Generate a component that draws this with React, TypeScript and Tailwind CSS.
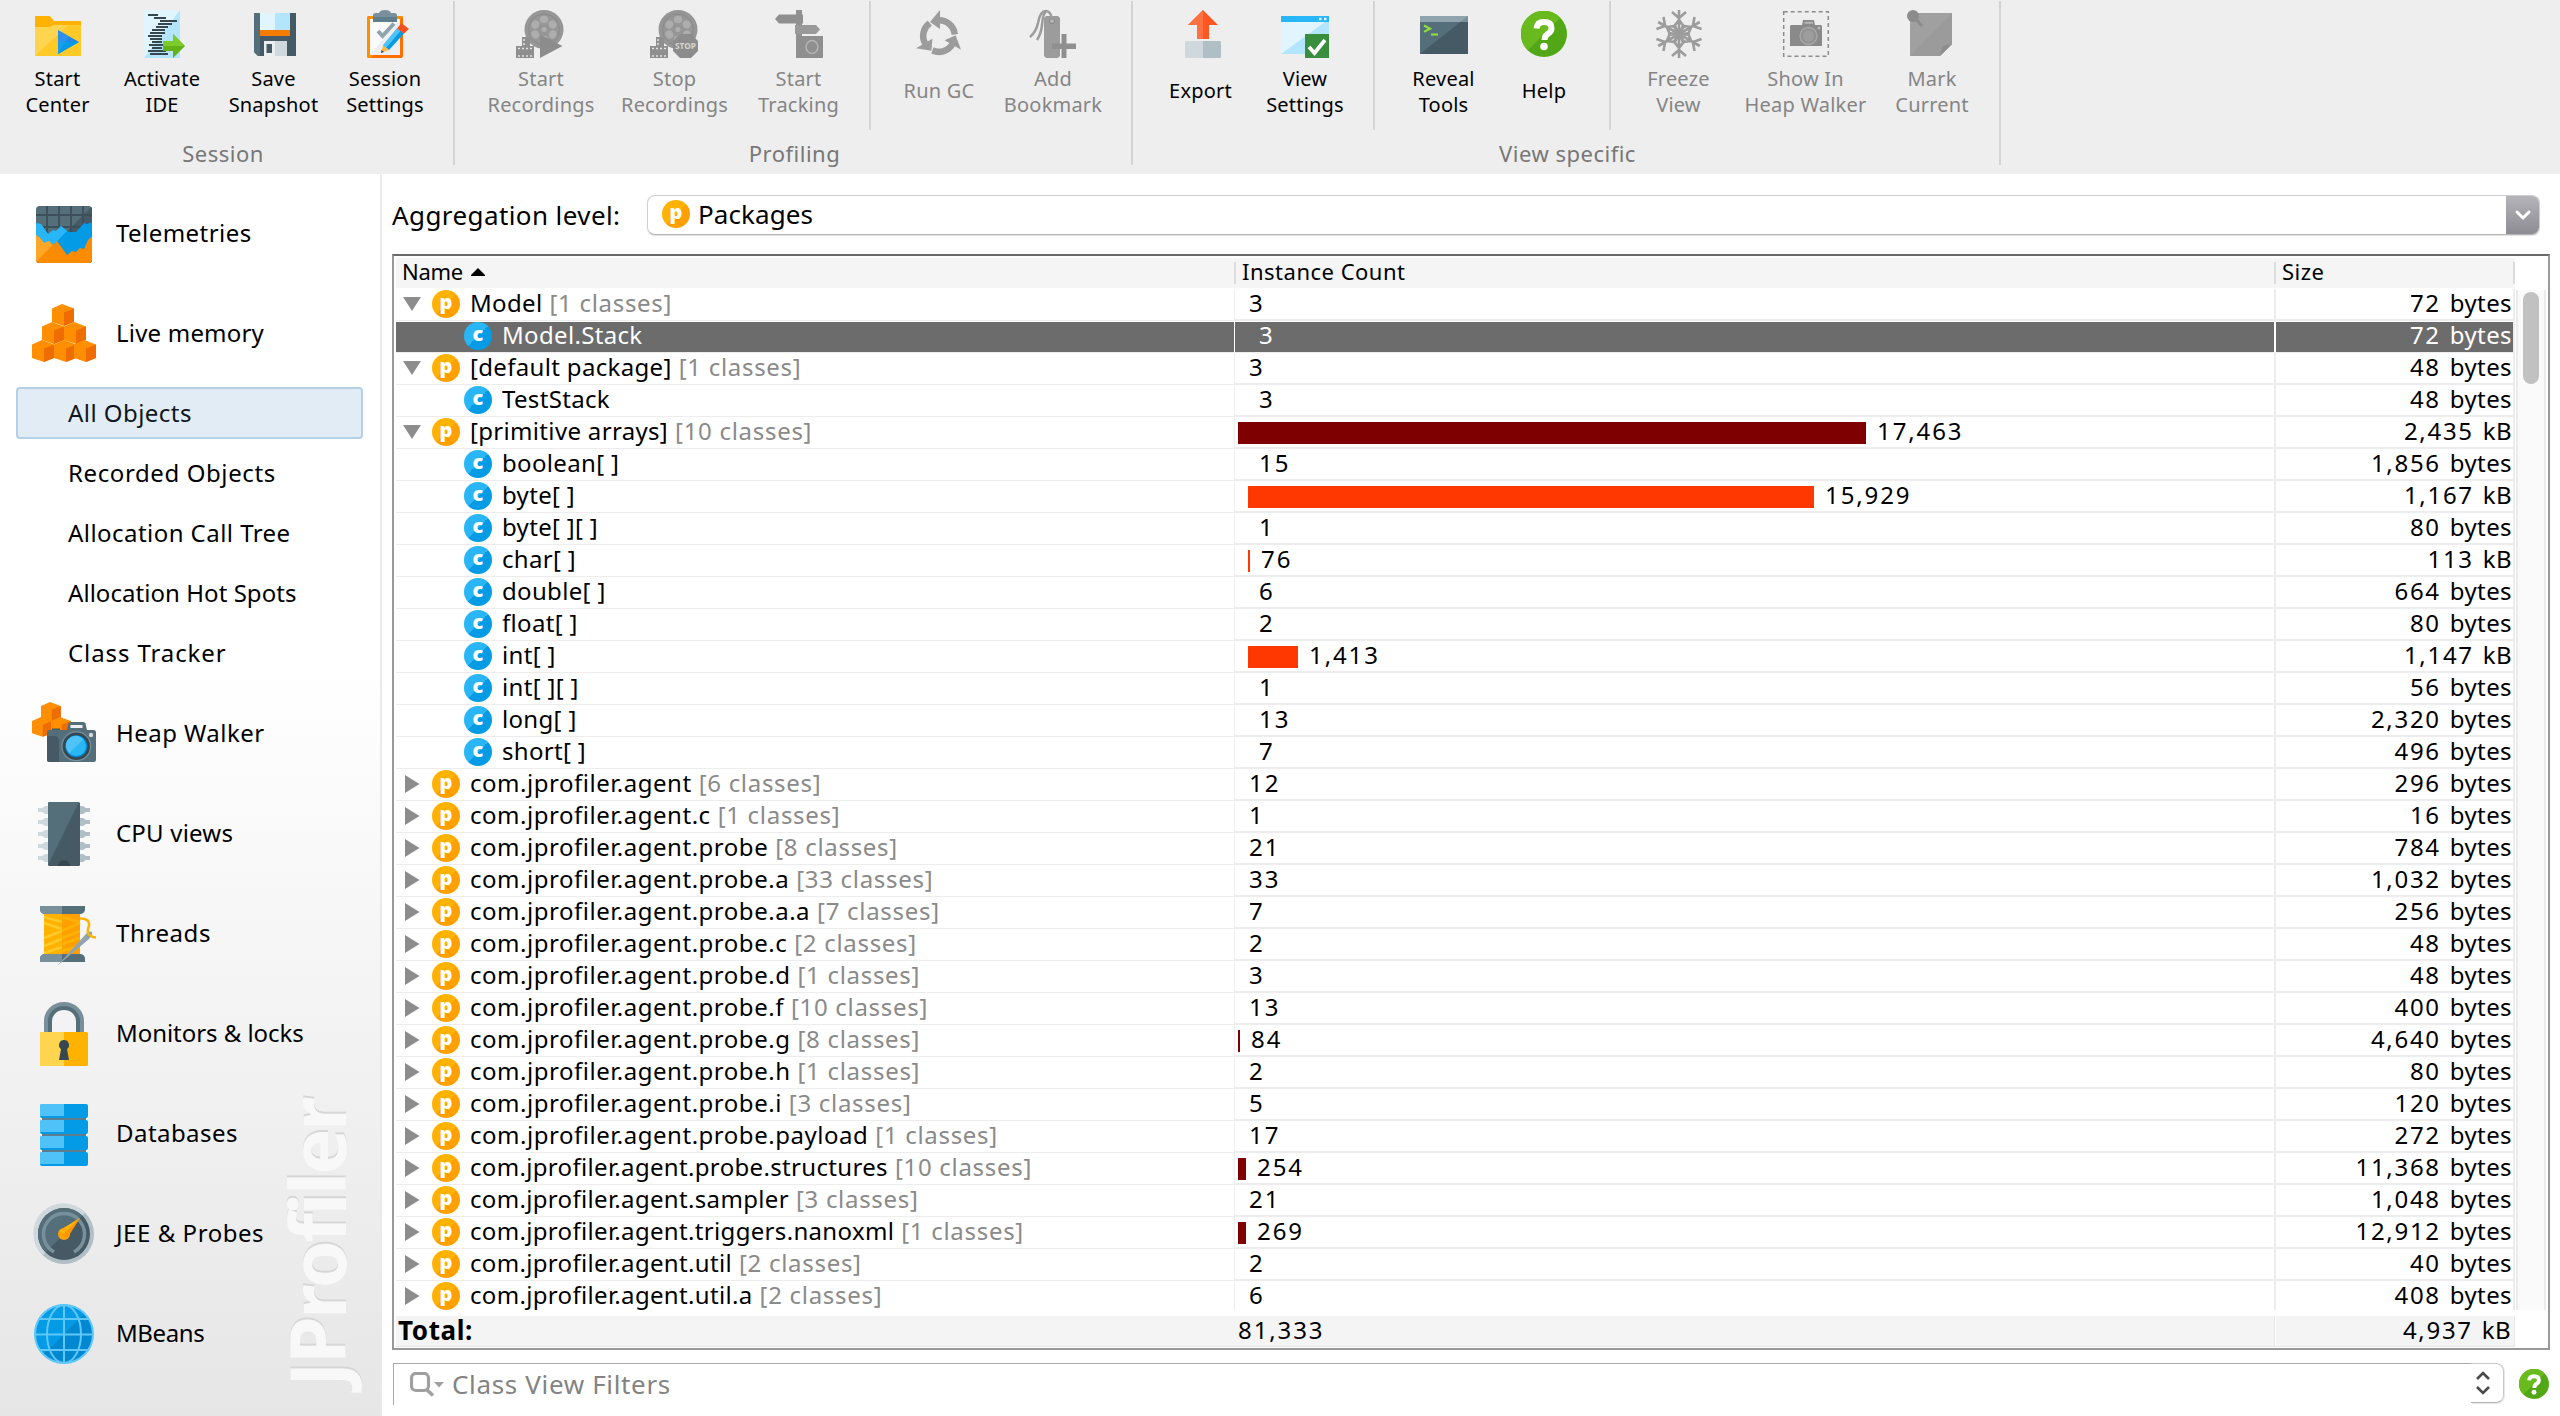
import React from 'react';

/* ---------- toolbar icons (48 x 48) ---------- */

const Svg48 = ({ children }: { children: React.ReactNode }) => (
  <svg width="48" height="48" viewBox="0 0 48 48" className="block shrink-0 overflow-visible">{children}</svg>
);

const StartCenterIcon = () => (
  <Svg48>
    <path d="M1 6h15l4 5h27v35H1z" fill="#ffb300" />
    <path d="M1 17h15l4-2h27v31H1z" fill="#ffca28" />
    <path d="M1 17h15l4-2h14L1 46z" fill="#ffd54f" />
    <path d="M24 20v24l21-12z" fill="#1e88e5" />
    <path d="M24 32h21L24 44z" fill="#039be5" />
    <path d="M24 20v24l11-18z" fill="#42a5f5" opacity=".35" />
  </Svg48>
);

const ActivateIdeIcon = () => (
  <Svg48>
    <path d="M6 0h36v48H6z" fill="#b3e5fc" />
    <path d="M6 0h36L6 48z" fill="#e1f5fe" />
    <path
      d="M10 5h10M16 8h12M22 11h17M20 14h14M18 17h12M14 20h13M12 23h15M10 26h14M12 29h12M14 32h10M11 35h14M14 38h10M10 41h18M12 44h18"
      stroke="#37474f" strokeWidth="1.8"
    />
    <path d="M25 31h10v-7l12 12-12 12v-7H25z" fill="#64b017" />
    <path d="M25 31h10v-7l12 12H25z" fill="#7ccb2b" />
  </Svg48>
);

const SaveIcon = () => (
  <Svg48>
    <path d="M4 3h42v43H8l-4-4z" fill="#455a64" />
    <path d="M4 3h6v43H8l-4-4z" fill="#546e7a" />
    <path d="M10 3h30v17H10z" fill="#b3e5fc" />
    <path d="M10 3h15v17H10z" fill="#e1f5fe" />
    <path d="M10 20h30v6H10z" fill="#f57c00" />
    <path d="M14 31h23v15H14z" fill="#cfd8dc" />
    <path d="M14 31h11v15H14z" fill="#eceff1" />
    <path d="M16.500 34h5.500v9h-5.500z" fill="#455a64" />
  </Svg48>
);

const SessionSettingsIcon = () => (
  <Svg48>
    <rect x="6" y="6" width="36" height="42" rx="2" fill="#ff6f00" />
    <path d="M6 8q0-2 2-2h34L10 48H8q-2 0-2-2z" fill="#ff8f00" />
    <path d="M9 9h30v36H9z" fill="#fafafa" />
    <path d="M39 9v36H9z" fill="#eceff1" />
    <path d="M12 12V5q0-2 3-2h3q1-3 6-3t6 3h3q3 0 3 2v7z" fill="#78909c" />
    <path d="M12 7h24v5H12z" fill="#607d8b" />
    <path d="M17 21l4.500 5L33 13.500" fill="none" stroke="#90a4ae" strokeWidth="4" />
    <path d="M36 18.500l7 5L28 40l-6-4.500z" fill="#039be5" />
    <path d="M36 18.500l3.500 2.500L25 38l-3-2.500z" fill="#4fc3f7" />
    <path d="M36 18.500L40.500 13l7.500 6-5 4.500z" fill="#f4511e" />
    <path d="M22 35.500l6 4.500-8 3z" fill="#ffb74d" />
    <path d="M20.500 40l-.5 3 3-1z" fill="#37474f" />
  </Svg48>
);

const Reel = () => (
  <>
    <circle cx="27" cy="19.500" r="19.500" fill="#969696" />
    <circle cx="27" cy="19.500" r="15.500" fill="none" stroke="#8a8a8a" strokeWidth="1" />
    {[0, 60, 120, 180, 240, 300].map((a) => (
      <ellipse key={a} cx="27" cy="9.500" rx="4.200" ry="3.800" fill="#adadad" transform={`rotate(${a} 27 19.500)`} />
    ))}
    <circle cx="27" cy="19.500" r="2.500" fill="#adadad" />
    <path d="M5 27h8v9h4v12H-1V36h6z" fill="#8f8f8f" />
    <path d="M1 38.500h15M1 46h15M7 29v6" stroke="#e2e2e2" strokeWidth="1.500" strokeDasharray="2 2" />
  </>
);

const StartRecordingsIcon = () => (
  <Svg48>
    <Reel />
    <path d="M23 24.500V48l22.500-12z" fill="#8c8c8c" />
  </Svg48>
);

const StopRecordingsIcon = () => (
  <Svg48>
    <Reel />
    <path d="M29 24h11l7 7v10l-7 7H29l-7-7V31z" fill="#8c8c8c" />
    <text x="34.500" y="39" textAnchor="middle" textLength="21" lengthAdjust="spacingAndGlyphs" fontSize="8.500" fontWeight="700" fontFamily="Noto Sans, sans-serif" fill="#d5d5d5">STOP</text>
  </Svg48>
);

const StartTrackingIcon = () => (
  <Svg48>
    <path d="M21 0h6v48h-6z" fill="#919191" />
    <path d="M4 4.500h24v9H4L0 9z" fill="#8f8f8f" />
    <path d="M20 15h21l4 4.500-4 4.500H20z" fill="#999" />
    <path d="M22 26h26v22H22z" fill="#8f8f8f" />
    <ellipse cx="37" cy="37" rx="6" ry="6.500" fill="none" stroke="#b5b5b5" strokeWidth="1.500" />
  </Svg48>
);

const RunGcIcon = () => (
  <Svg48>
    {[0, 120, 240].map((a) => (
      <g key={a} transform={`rotate(${a} 24 26)`}>
        <path d="M24 7A19 19 0 0 1 43 24L36.500 25A12.500 12.500 0 0 0 24 13.500z" fill="#9c9c9c" />
        <path d="M25 0v19l-10-7z" fill="#9c9c9c" />
      </g>
    ))}
  </Svg48>
);

const BookmarkIcon = () => (
  <Svg48>
    <path d="M17 6h12l2 2v38l-2 2H17l-2-2V8z" fill="#9c9c9c" />
    <circle cx="23" cy="11" r="2.500" fill="#b8b8b8" stroke="#858585" />
    <path d="M23 10Q22 1 17 1Q11 1 9 13Q7 22 1 27M17 2Q14 3 13 15Q12 24 8 30" fill="none" stroke="#9c9c9c" strokeWidth="2.500" />
    <path d="M32.500 24h5v9.500H47v5.500h-9.500v9h-5v-9H23v-5.500h9.500z" fill="#8f8f8f" />
  </Svg48>
);

const ExportIcon = () => (
  <Svg48>
    <path d="M26 0L11 15h9v14h12V15h9z" fill="#ff5722" />
    <path d="M26 0L11 15h9v14h6z" fill="#ff7043" />
    <rect x="8" y="31" width="36" height="17" rx="1" fill="#b0bec5" />
    <path d="M8 31h18v17H8z" fill="#cfd8dc" />
  </Svg48>
);

const ViewSettingsIcon = () => (
  <Svg48>
    <path d="M0 6h48v38H0z" fill="#b3e5fc" />
    <path d="M0 12h44L0 44z" fill="#e1f5fe" />
    <path d="M0 6h48v6H0z" fill="#29b6f6" />
    <path d="M38 9h2.500M43 9h2.500" stroke="#e1f5fe" strokeWidth="2.500" />
    <path d="M24 24h24v24H24z" fill="#388e3c" />
    <path d="M28 37l5.500 6L44 30" fill="none" stroke="#fff" strokeWidth="3.800" />
  </Svg48>
);

const RevealToolsIcon = () => (
  <Svg48>
    <path d="M0 6h48v38H0z" fill="#455a64" />
    <path d="M0 6h48L0 44z" fill="#546e7a" />
    <path d="M0 6h48v6H0z" fill="#78909c" />
    <path d="M0 6h48l-8 6H0z" fill="#90a4ae" />
    <path d="M4 15.500l6 3.200-6 3.200" fill="none" stroke="#8fdd3c" strokeWidth="2.200" />
    <path d="M11 24.500h7" stroke="#8fdd3c" strokeWidth="2.200" />
  </Svg48>
);

const HelpGlyph = ({ size }: { size: number }) => (
  <svg width={size} height={size} viewBox="0 0 46 46" className="block shrink-0">
    <circle cx="23" cy="23" r="23" fill="#52a716" />
    <path d="M39.260 6.740A23 23 0 1 0 6.740 39.260z" fill="#68ba1d" />
    <path d="M15.500 17.500Q16 11 23 11q7.500 0 7.500 6.200 0 3.400-3.800 5.800-3.200 2-3.200 6" fill="none" stroke="#fff" strokeWidth="6" />
    <circle cx="23" cy="35.500" r="3.800" fill="#fff" />
  </svg>
);

const FreezeIcon = () => (
  <Svg48>
    {[0, 60, 120, 180, 240, 300].map((a) => (
      <g key={a} transform={`rotate(${a} 24 24)`} fill="none" stroke="#9c9c9c" strokeWidth="2.600">
        <path d="M24 24V0M17 2l7 6 7-6M24 24l-5-7.500 5-6.500 5 6.500z" />
      </g>
    ))}
  </Svg48>
);

const ShowInHeapIcon = () => (
  <Svg48>
    <rect x="1.700" y="1.700" width="44.600" height="44.600" fill="none" stroke="#8c8c8c" strokeWidth="1.500" strokeDasharray="4 3" />
    <path d="M9 15h11l1-5h11l1 5h6l1 1v20H8V16z" fill="#8a8a8a" />
    <path d="M22.500 11.800h8.500v2h-8.500z" fill="#b5b5b5" />
    <circle cx="26.500" cy="26" r="8.500" fill="#929292" stroke="#a8a8a8" strokeWidth="1.300" />
    <circle cx="26.500" cy="26" r="5.500" fill="#9d9d9d" />
    <circle cx="37" cy="18" r="1.500" fill="#b5b5b5" />
  </Svg48>
);

const MarkCurrentIcon = () => (
  <Svg48>
    <path d="M2 3h42v31L32 46H2z" fill="#a0a0a0" />
    <path d="M44 3v31L32 46H2z" fill="#9b9b9b" />
    <path d="M32 46l3-10 9-2z" fill="#8d8d8d" />
    <path d="M6 7l8 9" stroke="#8c8c8c" strokeWidth="3" />
    <circle cx="5" cy="6" r="6" fill="#8c8c8c" />
  </Svg48>
);

/* ---------- toolbar ---------- */

type ToolProps = { w: string; icon: React.ReactNode; lines: string[]; off?: boolean };

const Tool = ({ w, icon, lines, off }: ToolProps) => (
  <div className={`flex shrink-0 flex-col items-center pt-[10px] ${w} ${off ? 'text-[#858585]' : 'text-black'}`}>
    {icon}
    <div className={`flex flex-col items-center whitespace-nowrap text-[20px] leading-[26px] tracking-[0.2px] ${lines.length === 1 ? 'mt-5' : 'mt-2'}`}>
      {lines.map((l) => <span key={l}>{l}</span>)}
    </div>
  </div>
);

const GroupLabel = ({ children }: { children: string }) => (
  <div className="pl-[3px] text-center text-[22px] leading-[26px] tracking-[0.5px] text-[#777]">{children}</div>
);

const Divider = ({ className }: { className: string }) => (
  <div className={`mt-px w-0.5 shrink-0 bg-[#d4d4d4] ${className}`} />
);

const Toolbar = () => (
  <header className="flex h-[174px] shrink-0 bg-[#eeeeee]">
    <div className="w-[453px] pr-[10px]">
      <div className="flex h-[140px]">
        <Tool w="w-[115px]" icon={<StartCenterIcon />} lines={['Start', 'Center']} />
        <Tool w="w-[94px]" icon={<ActivateIdeIcon />} lines={['Activate', 'IDE']} />
        <Tool w="w-[129px]" icon={<SaveIcon />} lines={['Save', 'Snapshot']} />
        <Tool w="w-[94px]" icon={<SessionSettingsIcon />} lines={['Session', 'Settings']} />
      </div>
      <GroupLabel>Session</GroupLabel>
    </div>
    <Divider className="h-[164px]" />
    <div className="w-[676px]">
      <div className="flex h-[140px] pl-[20px]">
        <Tool w="w-[132px]" icon={<StartRecordingsIcon />} lines={['Start', 'Recordings']} off />
        <Tool w="w-[135px]" icon={<StopRecordingsIcon />} lines={['Stop', 'Recordings']} off />
        <Tool w="w-[113px]" icon={<StartTrackingIcon />} lines={['Start', 'Tracking']} off />
        <Divider className="ml-[14px] h-[129px]" />
        <Tool w="w-[136px]" icon={<RunGcIcon />} lines={['Run GC']} off />
        <Tool w="w-[92px]" icon={<BookmarkIcon />} lines={['Add', 'Bookmark']} off />
      </div>
      <GroupLabel>Profiling</GroupLabel>
    </div>
    <Divider className="h-[164px]" />
    <div className="w-[866px]">
      <div className="flex h-[140px]">
        <Tool w="w-[135px]" icon={<ExportIcon />} lines={['Export']} />
        <Tool w="w-[74px]" icon={<ViewSettingsIcon />} lines={['View', 'Settings']} />
        <Divider className="ml-[31px] h-[129px]" />
        <Tool w="w-[137px]" icon={<RevealToolsIcon />} lines={['Reveal', 'Tools']} />
        <Tool w="w-[64px]" icon={<div className="flex size-12 items-center justify-center"><HelpGlyph size={46} /></div>} lines={['Help']} />
        <Divider className="ml-[33px] h-[129px]" />
        <Tool w="w-[135px]" icon={<FreezeIcon />} lines={['Freeze', 'View']} off />
        <Tool w="w-[119px]" icon={<ShowInHeapIcon />} lines={['Show In', 'Heap Walker']} off />
        <Tool w="w-[134px]" icon={<MarkCurrentIcon />} lines={['Mark', 'Current']} off />
      </div>
      <GroupLabel>View specific</GroupLabel>
    </div>
    <Divider className="h-[164px]" />
  </header>
);

/* ---------- sidebar icons (64 x 64) ---------- */

const Svg64 = ({ children }: { children: React.ReactNode }) => (
  <svg width="64" height="64" viewBox="0 0 64 64" className="block shrink-0 overflow-visible">{children}</svg>
);

const TelemetriesIcon = () => (
  <Svg64>
    <clipPath id="tele"><rect x="4" y="5" width="56" height="57" rx="3.500" /></clipPath>
    <g clipPath="url(#tele)">
      <path d="M4 5h56v57H4z" fill="#546e7a" />
      <path d="M60 5v57H4z" fill="#455a64" />
      <path d="M4 14h56M4 26h56M15 5v30M27 5v30M39 5v30M51 5v30" stroke="#3d4f58" strokeWidth="1.800" />
      <path d="M4 22l5 1 7 10 5-4 3 1 5-5 8 6 7 0 8-9 3 1 5-2v40H4z" fill="#039be5" />
      <path d="M4 22l5 1 7 10 5-4 3 1 5-5 6 5-31 32z" fill="#29b6f6" />
      <path d="M4 34l4 3 4 5 5-2 4 4 4-4 10 14 5-4 4 1 4-4 4 1 4-9 5-4v27H4z" fill="#fb8c00" />
      <path d="M4 34l4 3 4 5 5-2 3.500 4L4 61z" fill="#ffa726" />
    </g>
  </Svg64>
);

const Cube = ({ x, y, s = 1 }: { x: number; y: number; s?: number }) => (
  <g transform={`translate(${x} ${y}) scale(${s})`}>
    <path d="M0 4.500L10 0l12 4.500V18l-10 4-12-4z" fill="#ff8f00" />
    <path d="M12 8.500l10-4V18l-10 4z" fill="#ef6c00" />
  </g>
);

const LiveMemoryIcon = () => (
  <Svg64>
    <Cube x={20} y={3} />
    <Cube x={10} y={21} />
    <Cube x={32} y={21} />
    <Cube x={0} y={39} />
    <Cube x={22} y={39} />
    <Cube x={42} y={39} />
  </Svg64>
);

const HeapWalkerIcon = () => (
  <Svg64>
    <Cube x={9} y={1} s={0.9} />
    <Cube x={0} y={16} s={0.9} />
    <Cube x={19} y={16} s={0.9} />
    <path d="M35 29l1.500-6.500Q37 21 39 21h12q2 0 2.500 1.500L55 29z" fill="#546e7a" />
    <path d="M38.500 24h12v3h-12z" fill="#eceff1" />
    <path d="M20 27.500h8v3h-8z" fill="#455a64" />
    <rect x="15" y="29" width="49" height="32" rx="2.500" fill="#546e7a" />
    <path d="M15 35h9q3 1 3 5v21h-9.500q-2.500 0-2.500-2.500z" fill="#455a64" />
    <circle cx="44.300" cy="45.300" r="15" fill="#78909c" />
    <circle cx="44.300" cy="45.300" r="13.700" fill="#37474f" />
    <circle cx="44.300" cy="45.300" r="11" fill="#0288d1" />
    <circle cx="44.300" cy="45.300" r="9.800" fill="#29b6f6" />
    <path d="M51.200 38.400a9.800 9.800 0 1 0-13.800 13.800z" fill="#4fc3f7" />
    <circle cx="59" cy="34" r="2.200" fill="#cfd8dc" />
  </Svg64>
);

const CpuIcon = () => (
  <Svg64>
    {[9, 21, 33, 45, 57].map((y) => (
      <g key={y}>
        <path d={`M6 ${y - 2}h4l3-2h3v8h-3l-3-2H6z`} fill="#cfd8dc" />
        <path d={`M58 ${y - 2}h-4l-3-2h-3v8h3l3-2h4z`} fill="#b0bec5" />
      </g>
    ))}
    <rect x="16" y="1" width="32" height="64" rx="1.500" fill="#455a64" />
    <path d="M16 2.500q0-1.500 1.500-1.500H47L16 64z" fill="#546e7a" />
    <path d="M26 65a6 6 0 0 1 12 0z" fill="#37474f" />
  </Svg64>
);

const ThreadsIcon = () => (
  <Svg64>
    <path d="M8 5h45v4q-1 4-5 4H13q-4 0-5-4z" fill="#546e7a" />
    <path d="M8 5h22v8H13q-4 0-5-4z" fill="#78909c" />
    <path d="M12 13h36v40H12z" fill="#ffa000" />
    <path d="M12 13h18v40H12z" fill="#ffb300" />
    <path d="M12 16l18 5M12 22l18 6M12 37l18-7M12 45l18-7M12 52l18-6" stroke="#ffca28" strokeWidth="2.500" />
    <path d="M30 16l18 5M30 30l18-8M30 37l18-7M30 43l18-6M30 50l18-5" stroke="#ffb300" strokeWidth="2.500" />
    <path d="M13 53h35q4 0 5 4v4H8v-4q1-4 5-4z" fill="#546e7a" />
    <path d="M13 53h17v8H8v-4q1-4 5-4z" fill="#78909c" />
    <path d="M25 65l28-31q4-5 7-3 1 3-3 7z" fill="#90a4ae" />
    <path d="M48 17.500q10 0 9 7-3 8 1 10 3 2 6 2" fill="none" stroke="#ffb300" strokeWidth="2.500" />
  </Svg64>
);

const LockIcon = () => (
  <Svg64>
    <path d="M15 32V20a17 16 0 0 1 34 0v12" fill="none" stroke="#78909c" strokeWidth="6" />
    <path d="M18 32V20a14 13 0 0 1 28 0v12" fill="none" stroke="#546e7a" strokeWidth="4" />
    <rect x="8" y="31" width="48" height="34" rx="1.500" fill="#ffb300" />
    <path d="M9.500 31H32v34H9.500Q8 65 8 63.500v-31Q8 31 9.500 31z" fill="#ffd54f" />
    <path d="M32 39a5 5 0 0 1 3 9l2 11H27l2-11a5 5 0 0 1 3-9z" fill="#37474f" />
  </Svg64>
);

const DatabasesIcon = () => (
  <Svg64>
    <path d="M10 14h44v42H10z" fill="#607d8b" />
    {[3, 19, 35, 51].map((y) => (
      <g key={y}>
        <rect x="8" y={y} width="48" height="14" rx="2" fill="#039be5" />
        <path d={`M10 ${y}H32v12H8v-10q0-2 2-2z`} fill="#4fc3f7" />
      </g>
    ))}
  </Svg64>
);

const GaugeIcon = () => (
  <Svg64>
    <circle cx="32" cy="33" r="30" fill="#b0bec5" />
    <path d="M53.200 11.800A30 30 0 1 0 10.800 54.200z" fill="#cfd8dc" />
    <circle cx="32" cy="33" r="26" fill="#455a64" />
    <path d="M50.400 14.600A26 26 0 1 0 13.600 51.400z" fill="#546e7a" />
    <path d="M22 51a20.500 20.500 0 1 1 20 0" fill="none" stroke="#78909c" strokeWidth="3.500" />
    <circle cx="32" cy="33" r="6" fill="#ffa000" />
    <path d="M48 17L27.500 29.500l7.500 8z" fill="#ff9800" />
    <path d="M48 17L27.500 29.500 31 33z" fill="#ffb300" />
  </Svg64>
);

const GlobeIcon = () => (
  <Svg64>
    <circle cx="32" cy="33" r="29" fill="#0288d1" />
    <path d="M52.500 12.500A29 29 0 1 0 11.500 53.500z" fill="#039be5" />
    <g fill="none" stroke="#5fc8f8" strokeWidth="2">
      <circle cx="32" cy="33" r="29" />
      <ellipse cx="32" cy="33" rx="17" ry="29" />
      <path d="M32 4v58M3 33.500h58M7 18h50M7 49h50" />
    </g>
  </Svg64>
);

/* ---------- sidebar ---------- */

const SideItem = ({ icon, label, className = 'tracking-[0.45px]' }: { icon: React.ReactNode; label: string; className?: string }) => (
  <div className="flex h-[100px] items-center gap-[20px] pl-8">
    {icon}
    <span className={className}>{label}</span>
  </div>
);

const SubItem = ({ label, active, className = 'tracking-[0.45px]' }: { label: string; active?: boolean; className?: string }) => (
  <div className="flex h-[60px] items-center pl-4">
    <div className={`flex h-[52px] w-[347px] items-center rounded-[4px] border-2 pl-[50px] ${active ? 'border-[#b4d0e7] bg-[#e2ecf5] text-[#0f1720]' : 'border-transparent'} ${className}`}>{label}</div>
  </div>
);

const Sidebar = () => (
  <aside className="relative w-[382px] shrink-0 overflow-hidden border-r-2 border-[#eaeaea] bg-linear-to-b from-white from-40% to-[#e6e6e6] pt-[9px] text-[24px]">
    <div className="absolute top-[1213px] left-[278px] origin-top-left -rotate-90 text-[77px] leading-[77px] font-bold tracking-[-2.500px] text-[#f8f8f8] [text-shadow:2px_0_0_#d6d6d6]">JProfiler</div>
    <SideItem icon={<TelemetriesIcon />} label="Telemetries" />
    <SideItem icon={<LiveMemoryIcon />} label="Live memory" className="tracking-[0.2px]" />
    <SubItem label="All Objects" active />
    <SubItem label="Recorded Objects" className="tracking-[0.6px]" />
    <SubItem label="Allocation Call Tree" />
    <SubItem label="Allocation Hot Spots" className="tracking-[0.05px]" />
    <SubItem label="Class Tracker" className="tracking-[0.9px]" />
    <SideItem icon={<HeapWalkerIcon />} label="Heap Walker" />
    <SideItem icon={<CpuIcon />} label="CPU views" className="tracking-[0.2px]" />
    <SideItem icon={<ThreadsIcon />} label="Threads" className="tracking-[0.6px]" />
    <SideItem icon={<LockIcon />} label="Monitors & locks" className="tracking-[-0.05px]" />
    <SideItem icon={<DatabasesIcon />} label="Databases" />
    <SideItem icon={<GaugeIcon />} label="JEE & Probes" className="tracking-[0.55px]" />
    <SideItem icon={<GlobeIcon />} label="MBeans" className="tracking-[-0.4px]" />
  </aside>
);

/* ---------- table ---------- */

const PackageIcon = () => (
  <span className="flex size-7 shrink-0 justify-center rounded-full bg-[linear-gradient(135deg,#ffb300_50%,#ffa000_50%)] text-[20px] leading-[24px] font-black tracking-normal text-white">p</span>
);
const ClassIcon = () => (
  <span className="flex size-7 shrink-0 justify-center rounded-full bg-[linear-gradient(135deg,#29b6f6_50%,#039be5_50%)] text-[20px] leading-[24px] font-black tracking-normal text-white">c</span>
);

type Row = { name: string; n?: number; open?: boolean; child?: boolean; wide?: boolean; sel?: boolean; count: string; bar?: number; size: string };

const rows: Row[] = [
  { name: 'Model', n: 1, open: true, count: '3', size: '72 bytes' },
  { name: 'Model.Stack', child: true, sel: true, count: '3', size: '72 bytes' },
  { name: '[default package]', n: 1, open: true, count: '3', size: '48 bytes' },
  { name: 'TestStack', child: true, count: '3', size: '48 bytes' },
  { name: '[primitive arrays]', n: 10, open: true, count: '17,463', bar: 628, size: '2,435 kB' },
  { name: 'boolean[ ]', child: true, count: '15', size: '1,856 bytes' },
  { name: 'byte[ ]', child: true, count: '15,929', bar: 566, size: '1,167 kB' },
  { name: 'byte[ ][ ]', child: true, count: '1', size: '80 bytes' },
  { name: 'char[ ]', child: true, count: '76', bar: 2, size: '113 kB' },
  { name: 'double[ ]', child: true, count: '6', size: '664 bytes' },
  { name: 'float[ ]', child: true, count: '2', size: '80 bytes' },
  { name: 'int[ ]', child: true, count: '1,413', bar: 50, size: '1,147 kB' },
  { name: 'int[ ][ ]', child: true, count: '1', size: '56 bytes' },
  { name: 'long[ ]', child: true, count: '13', size: '2,320 bytes' },
  { name: 'short[ ]', child: true, count: '7', size: '496 bytes' },
  { name: 'com.jprofiler.agent', n: 6, wide: true, count: '12', size: '296 bytes' },
  { name: 'com.jprofiler.agent.c', n: 1, wide: true, count: '1', size: '16 bytes' },
  { name: 'com.jprofiler.agent.probe', n: 8, wide: true, count: '21', size: '784 bytes' },
  { name: 'com.jprofiler.agent.probe.a', n: 33, wide: true, count: '33', size: '1,032 bytes' },
  { name: 'com.jprofiler.agent.probe.a.a', n: 7, wide: true, count: '7', size: '256 bytes' },
  { name: 'com.jprofiler.agent.probe.c', n: 2, wide: true, count: '2', size: '48 bytes' },
  { name: 'com.jprofiler.agent.probe.d', n: 1, wide: true, count: '3', size: '48 bytes' },
  { name: 'com.jprofiler.agent.probe.f', n: 10, wide: true, count: '13', size: '400 bytes' },
  { name: 'com.jprofiler.agent.probe.g', n: 8, wide: true, count: '84', bar: 2, size: '4,640 bytes' },
  { name: 'com.jprofiler.agent.probe.h', n: 1, wide: true, count: '2', size: '80 bytes' },
  { name: 'com.jprofiler.agent.probe.i', n: 3, wide: true, count: '5', size: '120 bytes' },
  { name: 'com.jprofiler.agent.probe.payload', n: 1, wide: true, count: '17', size: '272 bytes' },
  { name: 'com.jprofiler.agent.probe.structures', n: 10, count: '254', bar: 8, size: '11,368 bytes' },
  { name: 'com.jprofiler.agent.sampler', n: 3, count: '21', size: '1,048 bytes' },
  { name: 'com.jprofiler.agent.triggers.nanoxml', n: 1, count: '269', bar: 8, size: '12,912 bytes' },
  { name: 'com.jprofiler.agent.util', n: 2, count: '2', size: '40 bytes' },
  { name: 'com.jprofiler.agent.util.a', n: 2, count: '6', size: '408 bytes' },
];

const Size = ({ value }: { value: string }) => {
  const [num, unit] = value.split(' ');
  return (
    <span className="flex gap-[9px]">
      <span className="tracking-[1.7px]">{num}</span>
      <span className="tracking-[0.4px]">{unit}</span>
    </span>
  );
};

const Triangle = ({ open }: { open?: boolean }) => (
  <svg width="18" height="18" viewBox="0 0 18 18" className="block shrink-0">
    <path d={open ? 'M0 2h18L9 16z' : 'M2 0v18l14.500-9z'} fill="#8c8c8c" />
  </svg>
);

const TableRow = ({ r }: { r: Row }) => (
  <div className={`flex h-8 shrink-0 ${r.sel ? 'text-white' : 'text-black'}`}>
    <div className={`flex w-[838px] border-b border-[#ededed] ${r.child ? 'pl-[68px]' : 'pl-[7px]'} ${r.sel ? 'border-t border-t-white bg-[#6c6c6c]' : 'pt-px'}`}>
      {!r.child && <span className="mt-[5px] mr-[11px]"><Triangle open={r.open} /></span>}
      {r.child ? <ClassIcon /> : <PackageIcon />}
      <span className={`-mt-px ml-[10px] flex leading-[28px] whitespace-pre ${r.wide ? 'tracking-[0.52px]' : 'tracking-[0.33px]'}`}>
        {r.name}
        {r.n !== undefined && <span className="ml-[7px] tracking-[0.7px] text-[#8a8a8a]">[{r.n} classes]</span>}
      </span>
    </div>
    <div className={`flex w-[1040px] border-l border-[#ededed] ${r.child ? 'pl-[13px]' : 'pl-[3px]'} ${r.sel ? 'border-t border-b border-t-white border-l-white bg-[#6c6c6c]' : 'border-b-2 pt-px'}`}>
      {r.bar !== undefined && (
        <span className={`mt-1 h-[22px] shrink-0 ${r.child ? 'bg-[#ff3700]' : 'bg-[#7f0000]'}`} style={{ width: r.bar }} />
      )}
      <span className="-mt-px ml-[11px] leading-[28px] tracking-[1.9px]">{r.count}</span>
    </div>
    <div className={`flex w-[241px] justify-end border-r-2 border-l-2 border-[#ededed] pr-px leading-[28px] ${r.sel ? 'border-t border-b border-t-white border-l-white bg-[#6c6c6c]' : 'border-b-2'}`}>
      <span className={r.sel ? '-mt-px' : ''}><Size value={r.size} /></span>
    </div>
  </div>
);

const Table = () => (
  <section className="flex h-[1096px] w-[2158px] shrink-0 flex-col border-2 border-[#999] border-t-[#696969] p-0.5 pr-0 text-[24px]">
    <div className="flex h-[30px] w-[2119px] shrink-0 bg-[#f5f5f5] text-[22px] leading-[27px]">
      <div className="flex w-[838px] items-start pl-[6px]">
        <span className="tracking-[-0.3px]">Name</span>
        <svg width="14" height="8" viewBox="0 0 14 8" className="mt-[10px] ml-[8px]"><path d="M7 0l7 7v1H0V7z" fill="#000" /></svg>
      </div>
      <div className="mt-1 h-[22px] w-0.5 bg-[#dcdcdc]" />
      <div className="w-[1038px] pl-[6px] tracking-[0.5px]">Instance Count</div>
      <div className="mt-1 h-[22px] w-0.5 bg-[#dcdcdc]" />
      <div className="w-[237px] pl-[6px] tracking-[0.5px]">Size</div>
      <div className="mt-1 h-[22px] w-0.5 shrink-0 bg-[#dcdcdc]" />
    </div>
    <div className="flex h-[1022px] shrink-0 pt-px">
      <div className="flex h-[1021px] w-[2119px] flex-col">
        {rows.map((r) => <TableRow key={r.name} r={r} />)}
      </div>
      <div className="mt-px ml-px flex w-[30px] justify-center border-x-2 border-[#ebebeb] bg-[#fafafa] pt-0.5">
        <div className="h-[92px] w-4 rounded-full bg-[#c1c1c1]" />
      </div>
    </div>
    <div className="h-[6px] shrink-0 bg-white" />
    <div className="flex h-[31px] w-[2119px] shrink-0 border-b border-[#e8e8e8] bg-[#f4f4f4] leading-[27px]">
      <div className="w-[842px] pl-0.5 text-[26px] leading-[28px] font-bold tracking-[0.6px]">Total:</div>
      <div className="w-[1036px] tracking-[1.9px]">81,333</div>
      <div className="h-[30px] w-px shrink-0 bg-[#e4e4e4]" />
      <div className="h-[30px] w-px shrink-0 bg-white" />
      <div className="flex flex-1 justify-end border-r border-[#e8e8e8] pr-[3px]"><Size value="4,937 kB" /></div>
    </div>
  </section>
);

/* ---------- main ---------- */

const AggregationRow = () => (
  <div className="flex h-[80px] shrink-0 items-start pt-[21px] text-[26px]">
    <span className="w-[255px] leading-[41px] tracking-[0.41px]">Aggregation level:</span>
    <div className="flex h-[40px] w-[1893px] overflow-hidden rounded-[8px] border border-[#cfcfcf] border-b-[#b5b5b5] bg-white shadow-[0_1px_1px_rgba(0,0,0,0.12)]">
      <div className="flex flex-1 pt-1 pl-[14px]">
        <PackageIcon />
        <span className="-mt-[3px] ml-[8px] leading-[34px] tracking-[0.1px]">Packages</span>
      </div>
      <div className="flex w-[33px] items-center justify-center bg-linear-to-b from-[#b5b4b9] to-[#8d8c92]">
        <svg width="18" height="12" viewBox="0 0 18 12"><path d="M3 3l6 6 6-6" fill="none" stroke="#fff" strokeWidth="3" strokeLinecap="round" strokeLinejoin="round" /></svg>
      </div>
    </div>
  </div>
);

const FilterRow = () => (
  <div className="mt-[13px] flex h-[43px] items-start">
    <div className="ml-px flex h-[42px] w-[2078px] border-t border-l border-[#ababab] pt-[8px] pl-[16px]">
      <svg width="36" height="26" viewBox="0 0 36 26" className="shrink-0">
        <rect x="1.500" y="1.500" width="17" height="17" rx="4.500" fill="none" stroke="#a0a0a0" strokeWidth="3.200" />
        <path d="M16.500 17.500l6.500 6" stroke="#a0a0a0" strokeWidth="3.500" />
        <path d="M24 10h10l-5 5.500z" fill="#a0a0a0" />
      </svg>
      <span className="-mt-px ml-[6px] text-[26px] leading-[27px] tracking-[0.65px] text-[#838383]">Class View Filters</span>
    </div>
    <div className="flex h-[40px] w-[33px] items-center rounded-r-[8px] border border-l-0 border-[#c8c8c8] border-b-[#b5b5b5] pl-[4px] shadow-[1px_1px_1px_rgba(0,0,0,0.1)]">
      <svg width="16" height="26" viewBox="0 0 16 26"><path d="M2 9l6-6 6 6M2 17l6 6 6-6" fill="none" stroke="#4a4a4a" strokeWidth="2.600" /></svg>
    </div>
    <div className="mt-[6px] ml-[15px]"><HelpGlyph size={30} /></div>
  </div>
);

export default function App() {
  return (
    <div className="flex h-[1416px] w-[2560px] flex-col overflow-hidden bg-white font-['Noto_Sans',sans-serif] text-black">
      <Toolbar />
      <div className="flex min-h-0 flex-1">
        <Sidebar />
        <main className="flex flex-1 flex-col bg-white pl-[10px]">
          <AggregationRow />
          <Table />
          <FilterRow />
        </main>
      </div>
    </div>
  );
}
